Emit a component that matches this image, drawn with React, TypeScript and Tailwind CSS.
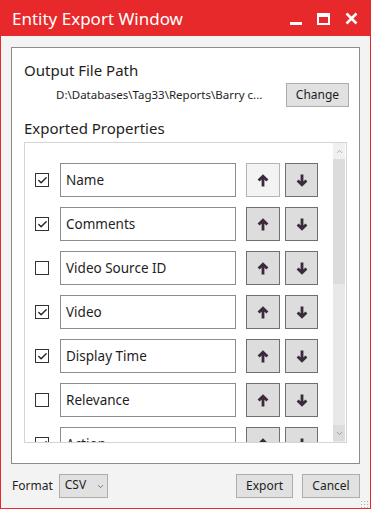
import { Check, ChevronDown, ChevronUp } from "lucide-react";

type Row = { label: string; checked: boolean; upDisabled?: boolean };

const rows: Row[] = [
    { label: "Name", checked: true, upDisabled: true },
    { label: "Comments", checked: true },
    { label: "Video Source ID", checked: false },
    { label: "Video", checked: true },
    { label: "Display Time", checked: true },
    { label: "Relevance", checked: false },
    { label: "Action", checked: true },
];

function Arrow({ down }: { down?: boolean }) {
    return (
        <svg width="12" height="13" viewBox="0 0 12 13" className={down ? "rotate-180" : ""}>
            <path d="M6 12.5 V2.5 M1.6 6.6 L6 2.2 L10.4 6.6" fill="none" stroke="#3b2a3c" strokeWidth="2.8" />
        </svg>
    );
}

function PropertyRow({ row }: { row: Row }) {
    return (
        <div className="flex h-[34px] shrink-0 items-center">
            <div className="ml-[10px] flex h-[14px] w-[14px] items-center justify-center border border-[#333] bg-white">
                {row.checked && <Check size={11} strokeWidth={3} color="#222" />}
            </div>
            <div className="ml-[11px] flex h-[34px] w-[176px] items-center border border-[#8c8c8c] bg-white pl-[5px] text-[13.5px] text-[#1e1e1e]">
                {row.label}
            </div>
            <button
                className={
                    row.upDisabled
                        ? "ml-[10px] flex h-[34px] w-[34px] items-center justify-center border border-[#b4b4b4] bg-[#f3f3f3]"
                        : "ml-[10px] flex h-[34px] w-[34px] items-center justify-center border border-[#707070] bg-[#dddddd]"
                }
            >
                <Arrow />
            </button>
            <button className="ml-[5px] flex h-[34px] w-[33px] items-center justify-center border border-[#707070] bg-[#dddddd]">
                <Arrow down />
            </button>
        </div>
    );
}

export default function App() {
    return (
        <div
            className="flex h-[509px] w-[371px] flex-col overflow-hidden border border-[#e8292b] bg-[#f3f3f3] text-[#1e1e1e]"
            style={{ fontFamily: '"Noto Sans", "Open Sans", sans-serif' }}
        >
            {/* title bar */}
            <div className="flex h-[35px] shrink-0 items-center bg-[#e8292b] pl-[11px] pr-[12px] text-white">
                <span className="text-[17px] leading-none">Entity Export Window</span>
                <div className="ml-auto flex items-center gap-[15px]">
                    <svg width="12" height="13" viewBox="0 0 12 13">
                        <rect x="0" y="10" width="12" height="3" fill="white" />
                    </svg>
                    <svg width="13" height="12" viewBox="0 0 13 12">
                        <rect x="1" y="1" width="11" height="10" fill="none" stroke="white" strokeWidth="2" />
                        <rect x="1" y="1" width="11" height="3" fill="white" />
                    </svg>
                    <svg width="13" height="13" viewBox="0 0 13 13">
                        <path d="M1.5 1.5 L11.5 11.5 M11.5 1.5 L1.5 11.5" stroke="white" strokeWidth="2.6" />
                    </svg>
                </div>
            </div>

            <div className="flex flex-1 flex-col px-[10px] pt-[11px]">
                {/* group box */}
                <div className="flex h-[417px] flex-col border border-[#8c8c8c] bg-white px-[12px]">
                    <div className="mt-[11px] text-[15px] leading-[22px]">Output File Path</div>
                    <div className="mt-[2px] flex items-center">
                        <span className="ml-[32px] text-[11.5px]">D:\Databases\Tag33\Reports\Barry c...</span>
                        <button className="ml-auto mr-[-2px] h-[24px] w-[63px] border border-[#adadad] bg-[#e1e1e1] text-[12px]">
                            Change
                        </button>
                    </div>
                    <div className="mt-[10px] text-[15px] leading-[22px]">Exported Properties</div>

                    {/* list box */}
                    <div className="mt-[3px] flex h-[301px] border border-[#d5d5d5]">
                        <div className="flex flex-1 flex-col gap-[10px] overflow-hidden pt-[20px]">
                            {rows.map((row) => (
                                <PropertyRow key={row.label} row={row} />
                            ))}
                        </div>
                        <div className="mr-[1px] flex w-[12px] flex-col bg-[#e8e8e8]">
                            <div className="flex h-[16px] items-center justify-center bg-[#f0f0f0]">
                                <ChevronUp size={9} color="#9a9a9a" />
                            </div>
                            <div className="h-[125px] bg-[#dcdcdc]" />
                            <div className="flex-1" />
                            <div className="mb-[1px] flex h-[16px] items-center justify-center bg-[#dcdcdc]">
                                <ChevronDown size={9} color="#8a8a8a" />
                            </div>
                        </div>
                    </div>
                </div>

                {/* footer */}
                <div className="mt-[10px] flex items-center">
                    <span className="ml-[1px] text-[12px]">Format</span>
                    <div className="ml-[6px] flex h-[24px] w-[49px] items-center border border-[#adadad] bg-[#e1e1e1] pl-[5px] text-[12px]">
                        <span className="-mt-[3px]">CSV</span>
                        <ChevronDown size={9} className="ml-[10px]" color="#555" />
                    </div>
                    <button className="ml-auto h-[24px] w-[57px] border border-[#adadad] bg-[#e1e1e1] text-[12px]">
                        Export
                    </button>
                    <button className="ml-[9px] h-[24px] w-[58px] border border-[#adadad] bg-[#e1e1e1] text-[12px]">
                        Cancel
                    </button>
                </div>
                <div className="ml-auto mr-[-8px] mt-[2px] h-[8px] w-[8px] bg-[radial-gradient(#b0b0b0_0.8px,transparent_0.9px)] bg-[length:3px_3px]" />
            </div>
        </div>
    );
}
